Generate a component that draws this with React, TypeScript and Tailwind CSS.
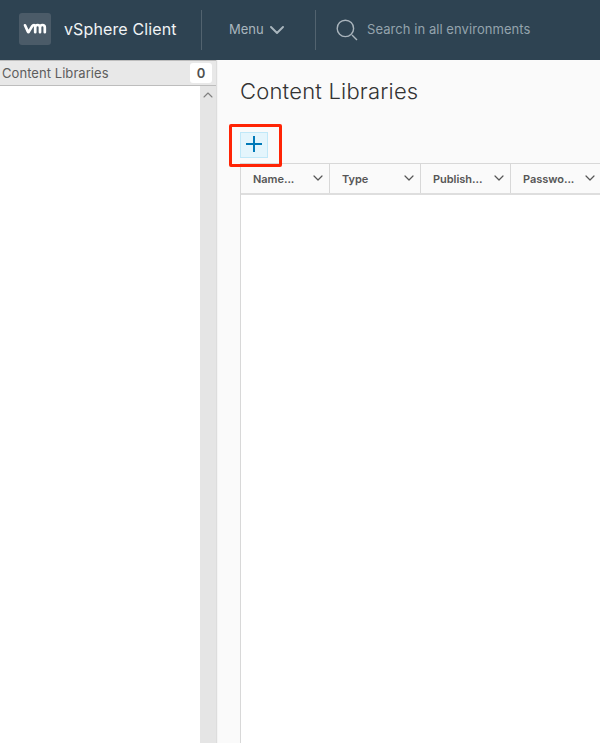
type ChevronProps = { className?: string; up?: boolean; width: number; height: number; strokeWidth?: number };

function Chevron({ className, up, width, height, strokeWidth = 1.2 }: ChevronProps) {
  const points = up
    ? `1,${height - 1} ${width / 2},1 ${width - 1},${height - 1}`
    : `1,1 ${width / 2},${height - 1} ${width - 1},1`;
  return (
    <svg className={className} width={width} height={height} fill="none" stroke="currentColor" strokeWidth={strokeWidth} strokeLinecap="round" strokeLinejoin="round">
      <polyline points={points} />
    </svg>
  );
}

function Header() {
  return (
    <header className="flex h-[60px] shrink-0 items-center bg-[#2e4352] pb-[2px]">
      <div className="ml-[19px] flex size-8 shrink-0 items-center justify-center rounded-[3px] bg-[#4b5b68]">
        <svg width="24" height="12" viewBox="0 0 24 12" fill="none" stroke="#fff" strokeWidth="2.7" strokeLinecap="round" strokeLinejoin="round">
          <path d="M2 2.3 L4.9 8.6 Q5.4 9.6 5.9 8.6 L9.2 3.1 Q9.9 2 11 2 Q12.2 2.1 12.2 3.4 V9.2 M12.2 4.4 Q12.4 2 14.5 2 Q17 2 17 4.4 V9.2 M17 4.4 Q17.2 2 19.4 2 Q21.8 2 21.8 4.4 V9.2" />
        </svg>
      </div>
      <span className="ml-[13px] w-[113px] whitespace-nowrap text-[16px] leading-6 tracking-[0.12px] text-[#f0f3f5]">vSphere Client</span>
      <div className="mt-px ml-6 h-10 w-px bg-[#52636f]" />
      <div className="flex w-[113px] items-center pl-[27px] text-[#a9b6be]">
        <span className="w-[35px] whitespace-nowrap text-[13px] leading-5">Menu</span>
        <Chevron className="mt-px ml-[6px]" width={14} height={8} strokeWidth={1.9} />
      </div>
      <div className="mt-px h-10 w-px bg-[#52636f]" />
      <svg className="mt-[3px] ml-5 shrink-0" width="23" height="23" viewBox="0 0 23 23" fill="none" stroke="#a9b4bc" strokeWidth="1.4" strokeLinecap="square">
        <circle cx="9.4" cy="9.4" r="8.2" />
        <path d="M16.5 16.5 L20.5 20.5" />
      </svg>
      <span className="ml-2 whitespace-nowrap text-[13px] leading-5 tracking-[0.06px] text-[#94a3ad]">Search in all environments</span>
    </header>
  );
}

function Sidebar() {
  return (
    <aside className="flex w-[217px] shrink-0 flex-col border-r border-[#dddddd] bg-white">
      <div className="flex h-[26px] shrink-0 items-center justify-between border-y border-[#bdbdbd] bg-[#e8e8e8] pr-1 pl-[2px]">
        <span className="whitespace-nowrap text-[13px] leading-5 tracking-[0.06px] text-[#5d5d5d]">Content Libraries</span>
        <span className="flex h-5 w-[22px] items-center justify-center rounded-[3px] bg-white pt-px text-[13px] font-semibold text-[#505050]">0</span>
      </div>
      <div className="flex flex-1 justify-end">
        <div className="flex w-4 justify-center bg-[#e5e5e5] pt-[6px] text-[#808080]">
          <Chevron up width={10} height={6} strokeWidth={1.1} />
        </div>
      </div>
    </aside>
  );
}

const columns = [
  { label: "Name...", width: "w-[89px]" },
  { label: "Type", width: "w-[91px]" },
  { label: "Publish...", width: "w-[90px]" },
  { label: "Passwo...", width: "w-[91px]" },
];

function LibraryTable() {
  return (
    <div className="ml-[22px] flex flex-1 flex-col overflow-hidden border-t border-l border-[#d8d8d8] bg-white">
      <div className="flex h-[31px] shrink-0 border-b-2 border-[#dedede] bg-[#fafafa]">
        {columns.map(({ label, width }) => (
          <div key={label} className={`flex shrink-0 items-center justify-between border-r border-[#d8d8d8] pr-[6px] pl-3 text-[#565656] ${width}`}>
            <span className="whitespace-nowrap pt-px text-[11px] leading-4 font-semibold tracking-[-0.04px]">{label}</span>
            <Chevron className="-mt-px" width={10} height={6} strokeWidth={1.2} />
          </div>
        ))}
      </div>
    </div>
  );
}

export default function App() {
  return (
    <div className="flex h-[743px] w-[600px] flex-col overflow-hidden bg-[#fafafa] font-['Inter','Open_Sans',sans-serif]">
      <Header />
      <div className="flex min-h-0 flex-1">
        <Sidebar />
        <main className="flex min-w-0 flex-1 flex-col border-l border-[#f4f4f4]">
          <h1 className="mt-[17px] ml-[22px] h-7 whitespace-nowrap text-[22px] leading-7 font-light tracking-[0.2px] text-[#333]">Content Libraries</h1>
          <div className="relative mt-[27px] mb-[5px] ml-[22px] h-[26px] w-7">
            <button className="flex h-[26px] w-7 items-center justify-center border border-[#c0e8f8] bg-[#e4f5fc] pb-[2px]" aria-label="Create">
              <svg width="16" height="16" stroke="#0079b8" strokeWidth="2">
                <path d="M8 0V16M0 8H16" />
              </svg>
            </button>
            <div className="pointer-events-none absolute -top-2 -left-[11px] h-[43px] w-[53px] rounded-[2px] border-[3px] border-[#ff2405]" />
          </div>
          <LibraryTable />
        </main>
      </div>
    </div>
  );
}
